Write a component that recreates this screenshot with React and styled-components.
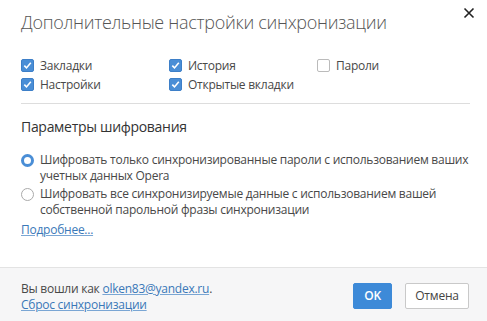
import React from "react";
import styled, { createGlobalStyle } from "styled-components";

const Global = createGlobalStyle`
  html, body {
    margin: 0;
    padding: 0;
    background: #fff;
  }
  body {
    font-family: "Open Sans", "Noto Sans", sans-serif;
    color: #333;
  }
`;

const Dialog = styled.div`
  width: 487px;
  height: 321px;
  display: flex;
  flex-direction: column;
  background: #fff;
  overflow: hidden;
`;

const Body = styled.div`
  flex: 1;
  padding: 0 17px 0 21px;
  display: flex;
  flex-direction: column;
`;

const Header = styled.div`
  display: flex;
  justify-content: space-between;
  align-items: flex-start;
`;

const Title = styled.h1`
  margin: 10px 0 0;
  font-size: 18px;
  font-weight: 300;
  color: #555;
  letter-spacing: -0.3px;
  white-space: nowrap;
`;

const Close = styled.button`
  border: none;
  background: transparent;
  padding: 0;
  margin: 5px -7px 0 0;
  width: 16px;
  height: 16px;
  cursor: pointer;
  display: flex;
  align-items: center;
  justify-content: center;
`;

const Options = styled.div`
  display: grid;
  grid-template-columns: 148px 148px 148px;
  row-gap: 3px;
  margin-top: 23px;
`;

const CheckLabel = styled.label`
  display: flex;
  align-items: center;
  gap: 6px;
  font-size: 12px;
  letter-spacing: -0.25px;
  color: #484848;
  height: 16px;
`;

const Box = styled.span`
  width: 13px;
  height: 13px;
  box-sizing: border-box;
  border-radius: 2px;
  display: flex;
  align-items: center;
  justify-content: center;
  background: ${(p) => (p.$on ? "#4a8ed6" : "#fff")};
  border: 1px solid ${(p) => (p.$on ? "#3d7fc8" : "#bbb")};
`;

const Separator = styled.hr`
  margin: 11px 0 0;
  border: none;
  border-top: 1px solid #ddd;
`;

const Section = styled.h2`
  margin: 13px 0 0;
  font-size: 14px;
  font-weight: 400;
  letter-spacing: -0.3px;
  color: #333;
`;

const Radios = styled.div`
  display: flex;
  flex-direction: column;
  gap: 2px;
  margin-top: 16px;
`;

const RadioLabel = styled.label`
  display: flex;
  align-items: flex-start;
  gap: 6px;
  font-size: 12px;
  letter-spacing: -0.25px;
  line-height: 16px;
  color: #484848;
  white-space: nowrap;
`;

const Dot = styled.span`
  flex: none;
  width: 13px;
  height: 13px;
  margin-top: 2px;
  box-sizing: border-box;
  border-radius: 50%;
  border: ${(p) => (p.$on ? "3.5px solid #4a8ed6" : "1px solid #aaa")};
  background: #fff;
`;

const Link = styled.a`
  color: #3a78b8;
  text-decoration: underline;
  text-decoration-color: #7aa6d4;
  cursor: pointer;
`;

const More = styled(Link)`
  font-size: 12px;
  letter-spacing: -0.25px;
  margin-top: 3px;
  align-self: flex-start;
`;

const Footer = styled.div`
  height: 53px;
  background: #f6f6f7;
  border-top: 1px solid #e3e3e3;
  display: flex;
  align-items: center;
  justify-content: space-between;
  padding: 0 18px 0 21px;
`;

const Account = styled.div`
  font-size: 12px;
  letter-spacing: -0.25px;
  line-height: 16px;
  color: #484848;
  margin-top: 4px;
`;

const Buttons = styled.div`
  display: flex;
  gap: 13px;
  margin-top: 2px;
`;

const Button = styled.button`
  height: 26px;
  box-sizing: border-box;
  border-radius: 2px;
  font-family: inherit;
  font-size: 12px;
  letter-spacing: -0.2px;
  cursor: pointer;
  padding: 0;
  width: ${(p) => (p.$primary ? "39px" : "64px")};
  background: ${(p) => (p.$primary ? "#3d8ad8" : "#fff")};
  color: ${(p) => (p.$primary ? "#fff" : "#444")};
  border: 1px solid ${(p) => (p.$primary ? "#3d8ad8" : "#c9c9c9")};
  font-weight: ${(p) => (p.$primary ? 600 : 400)};
`;

function Check({ on, children }) {
  return (
    <CheckLabel>
      <Box $on={on}>
        {on && (
          <svg width="9" height="9" viewBox="0 0 9 9">
            <path d="M1.3 4.6 L3.5 6.9 L7.8 1.8" fill="none" stroke="#fff" strokeWidth="1.6" />
          </svg>
        )}
      </Box>
      {children}
    </CheckLabel>
  );
}

function Radio({ on, children }) {
  return (
    <RadioLabel>
      <Dot $on={on} />
      <span>{children}</span>
    </RadioLabel>
  );
}

export default function App() {
  return (
    <>
      <Global />
      <Dialog>
        <Body>
          <Header>
            <Title>Дополнительные настройки синхронизации</Title>
            <Close aria-label="Закрыть">
              <svg width="12" height="12" viewBox="0 0 12 12">
                <path d="M1.5 1.5 L10.5 10.5 M10.5 1.5 L1.5 10.5" stroke="#222" strokeWidth="1.6" />
              </svg>
            </Close>
          </Header>
          <Options>
            <Check on>Закладки</Check>
            <Check on>История</Check>
            <Check>Пароли</Check>
            <Check on>Настройки</Check>
            <Check on>Открытые вкладки</Check>
          </Options>
          <Separator />
          <Section>Параметры шифрования</Section>
          <Radios>
            <Radio on>
              Шифровать только синхронизированные пароли с использованием ваших
              <br />
              учетных данных Opera
            </Radio>
            <Radio>
              Шифровать все синхронизируемые данные с использованием вашей
              <br />
              собственной парольной фразы синхронизации
            </Radio>
          </Radios>
          <More>Подробнее...</More>
        </Body>
        <Footer>
          <Account>
            Вы вошли как <Link>olken83@yandex.ru</Link>.
            <br />
            <Link>Сброс синхронизации</Link>
          </Account>
          <Buttons>
            <Button $primary>OK</Button>
            <Button>Отмена</Button>
          </Buttons>
        </Footer>
      </Dialog>
    </>
  );
}
